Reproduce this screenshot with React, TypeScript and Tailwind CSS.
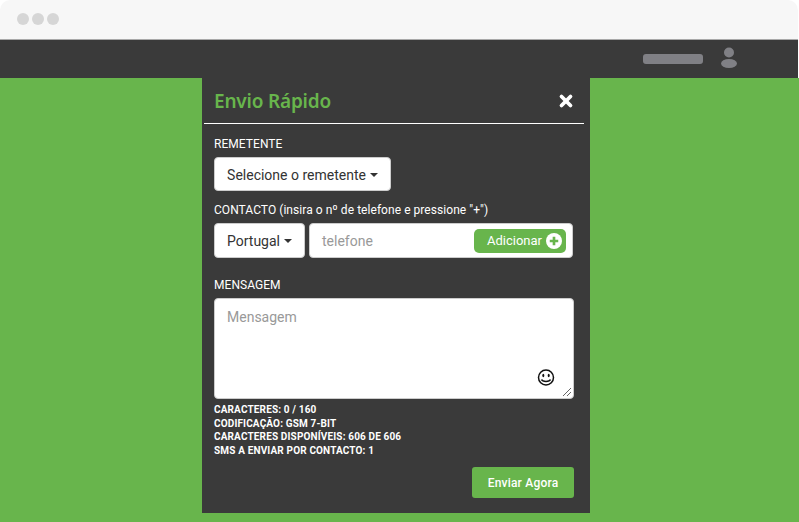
import { X } from "lucide-react";

const roboto = "font-['Roboto','Liberation_Sans',sans-serif]";

function Caret() {
  return <span className="ml-1 inline-block h-0 w-0 border-x-4 border-t-4 border-x-transparent border-t-[#333]" />;
}

export default function App() {
  return (
    <div className={`flex h-[522px] w-[799px] flex-col overflow-hidden bg-white ${roboto}`}>
      {/* browser chrome */}
      <div className="flex h-[40px] w-[798px] items-center gap-[3px] rounded-t-[10px] border-b border-[#a9a9a9] bg-[#f7f7f7] pb-[1px] pl-[17px]">
        <span className="h-3 w-3 rounded-full bg-[#d6d6d6]" />
        <span className="h-3 w-3 rounded-full bg-[#d6d6d6]" />
        <span className="h-3 w-3 rounded-full bg-[#d6d6d6]" />
      </div>

      {/* top bar */}
      <div className="flex h-[38px] w-[798px] shrink-0 items-center justify-end bg-[#3a3a3a] pr-[60px]">
        <span className="mr-[17px] h-[10px] w-[60px] rounded-[3px] bg-[#808085]" />
        <svg width="18" height="22" viewBox="0 0 18 22" className="mt-[-2px]">
          <circle cx="9" cy="5.5" r="5" fill="#808085" />
          <ellipse cx="9" cy="16.5" rx="8" ry="4.5" fill="#808085" />
        </svg>
      </div>

      <div className="flex flex-1 justify-center bg-[#68b54c] pr-[7px]">
        <div className="flex h-[435px] w-[388px] flex-col bg-[#3a3a3a]">
          <div className="ml-[2px] mr-[6px] flex h-[46px] shrink-0 items-center justify-between border-b border-white pl-[10px] pr-[9px]">
            <h2 className="pt-[2px] font-['Noto_Sans',sans-serif] text-[19px] font-semibold tracking-[-0.2px] text-[#68b54c]">Envio Rápido</h2>
            <X size={18} strokeWidth={5} className="text-white" />
          </div>

          <div className="flex flex-col pl-[12px] pr-[16px] text-white">
            <label className="mt-[13px] text-[12px] leading-[15px] tracking-[0.05px]">REMETENTE</label>
            <button className="mt-[5px] flex h-[34px] w-[177px] items-center justify-center rounded-[4px] border border-[#ccc] bg-white pt-[2px] text-[14px] text-[#333]">
              Selecione o remetente
              <Caret />
            </button>

            <label className="mt-[12px] text-[12px] leading-[15px] tracking-[0.05px]">CONTACTO (insira o nº de telefone e pressione "+")</label>
            <div className="mt-[5px] flex h-[35px] gap-[4px]">
              <button className="flex w-[91px] items-center justify-center rounded-[4px] border border-[#ccc] bg-white pt-[1px] text-[14px] text-[#333]">
                Portugal
                <Caret />
              </button>
              <div className="flex w-[264px] items-center justify-between rounded-[4px] border border-[#ccc] bg-white pl-[12px] pr-[6px]">
                <span className="pt-[1px] text-[14px] text-[#999]">telefone</span>
                <button className="flex h-[24px] w-[92px] items-center justify-end gap-[4px] rounded-[5px] bg-[#68b54c] pr-[4px] text-[13px] text-white">
                  Adicionar
                  <svg width="16" height="16" viewBox="0 0 17 17">
                    <circle cx="8.5" cy="8.5" r="8.5" fill="#fff" />
                    <path d="M8.5 4v9M4 8.5h9" stroke="#68b54c" strokeWidth="2.8" />
                  </svg>
                </button>
              </div>
            </div>

            <label className="mt-[20px] text-[12px] leading-[15px] tracking-[0.05px]">MENSAGEM</label>
            <div className="relative mt-[5px] h-[101px] w-[360px] rounded-[4px] border border-[#ccc] bg-white px-[12px] py-[6px]">
              <span className="text-[14px] text-[#999]">Mensagem</span>
              <svg width="18" height="18" viewBox="0 0 18 18" className="absolute right-[18px] bottom-[11px]">
                <circle cx="9" cy="8.5" r="7.5" fill="none" stroke="#111" strokeWidth="1.5" />
                <ellipse cx="6.3" cy="6.5" rx="1" ry="1.7" fill="#111" />
                <ellipse cx="11.7" cy="6.5" rx="1" ry="1.7" fill="#111" />
                <path d="M4.5 10.5c1 2.6 8 2.6 9 0" fill="none" stroke="#111" strokeWidth="1.5" />
              </svg>
              <svg width="10" height="10" viewBox="0 0 10 10" className="absolute right-[1px] bottom-[1px]">
                <path d="M1 9L9 1M5 9L9 5" stroke="#666" strokeWidth="1" fill="none" />
              </svg>
            </div>

            <div className="mt-[4px] text-[10px] leading-[13.5px] font-bold tracking-[0.15px]">
              <div>CARACTERES: 0 / 160</div>
              <div>CODIFICAÇÃO: GSM 7-BIT</div>
              <div>CARACTERES DISPONÍVEIS: 606 DE 606</div>
              <div>SMS A ENVIAR POR CONTACTO: 1</div>
            </div>

            <div className="mt-[10px] flex justify-end">
              <button className="h-[31px] w-[102px] rounded-[3px] bg-[#68b54c] text-[12px] font-medium tracking-[0.2px] text-white">Enviar Agora</button>
            </div>
          </div>
        </div>
      </div>
    </div>
  );
}
